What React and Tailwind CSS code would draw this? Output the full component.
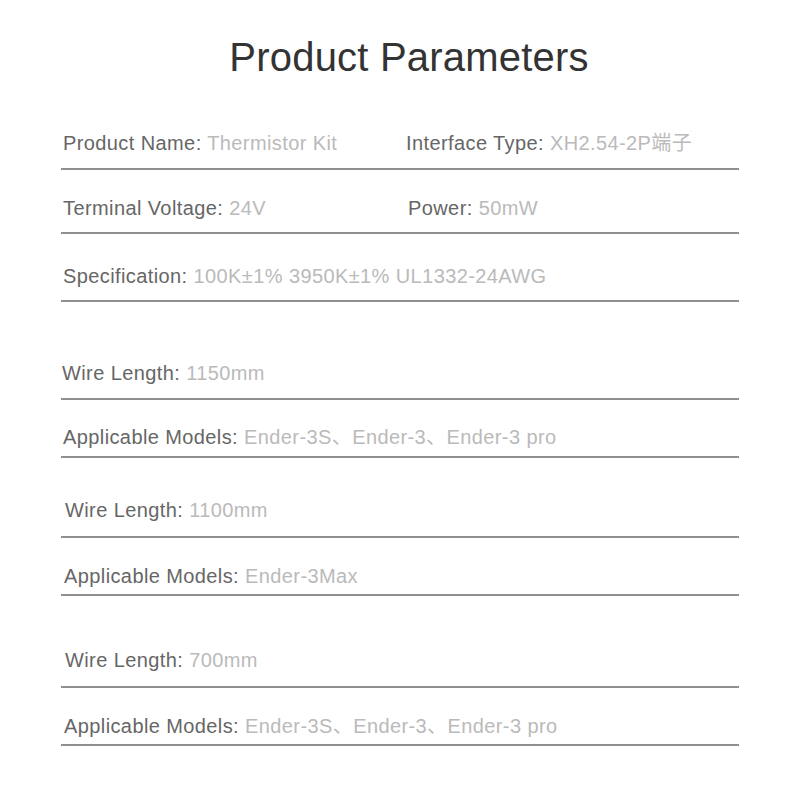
import React from 'react';

const rows = [
  { pt: 'pt-0', pb: 'pb-[13px]', cols: [['Product Name:', 'Thermistor Kit', 'pl-[2px]'], ['Interface Type:', 'XH2.54-2P端子', 'pl-0']] },
  { pt: 'pt-[26px]', pb: 'pb-[12px]', cols: [['Terminal Voltage:', '24V', 'pl-[2px]'], ['Power:', '50mW', 'pl-[2px]']] },
  { pt: 'pt-[30px]', pb: 'pb-[12px]', cols: [['Specification:', '100K±1% 3950K±1% UL1332-24AWG', 'pl-[2px]']] },
  { pt: 'pt-[59px]', pb: 'pb-[13px]', cols: [['Wire Length:', '1150mm', 'pl-[1px]']] },
  { pt: 'pt-[25px]', pb: 'pb-[7px]', cols: [['Applicable Models:', 'Ender-3S、Ender-3、Ender-3 pro', 'pl-[2px]']] },
  { pt: 'pt-[40px]', pb: 'pb-[14px]', cols: [['Wire Length:', '1100mm', 'pl-[4px]']] },
  { pt: 'pt-[26px]', pb: 'pb-[6px]', cols: [['Applicable Models:', 'Ender-3Max', 'pl-[3px]']] },
  { pt: 'pt-[52px]', pb: 'pb-[14px]', cols: [['Wire Length:', '700mm', 'pl-[4px]']] },
  { pt: 'pt-[26px]', pb: 'pb-[6px]', cols: [['Applicable Models:', 'Ender-3S、Ender-3、Ender-3 pro', 'pl-[3px]']] },
];

const Field = ({ label, value, pad, wide }) => (
  <div className={`${pad} ${wide ? 'w-[345px] shrink-0' : ''} whitespace-nowrap tracking-[0.4px]`}>
    <span className="text-[#666666]">{label}</span>{' '}
    <span className="text-[#bababa]">{value}</span>
  </div>
);

const App = () => {
  return (
    <div
      className="w-[790px] h-[812px] bg-white overflow-hidden"
      style={{ fontFamily: '"Liberation Sans", "Noto Sans CJK SC", sans-serif' }}
    >
      <h1 className="pt-[37px] pl-[28px] text-center text-[40px] leading-[40px] text-[#333333] font-normal tracking-[0.2px]">
        Product Parameters
      </h1>
      <div className="ml-[61px] w-[678px] mt-[54px]">
        {rows.map((r, i) => (
          <div key={i} className={`${r.pt} ${r.pb} border-b-2 border-[#8f8f8f] flex text-[20px] leading-[24px]`}>
            {r.cols.map((c, j) => (
              <Field key={j} label={c[0]} value={c[1]} pad={c[2]} wide={j === 0 && r.cols.length > 1} />
            ))}
          </div>
        ))}
      </div>
    </div>
  );
};

export default App;
